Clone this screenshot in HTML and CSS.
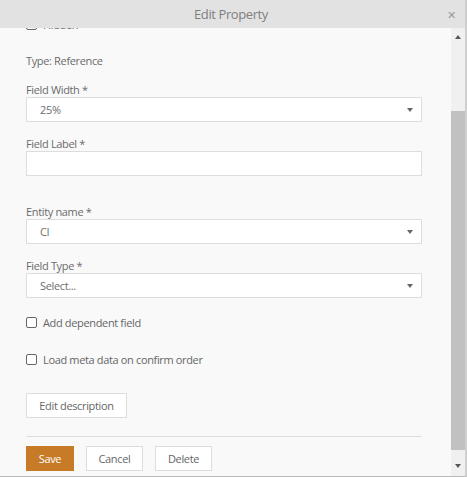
FILE: index.html
```html
<!DOCTYPE html>
<html lang="en">
<head>
    <meta charset="UTF-8">
    <meta name="viewport" content="width=device-width, initial-scale=1.0">
    <title>Edit Property</title>
    <link rel="stylesheet" href="styles.css">
</head>
<body>
    <div class="modal">
        <div class="modal-header">
            <span class="modal-title">Edit Property</span>
            <span class="modal-close">&#x2715;</span>
        </div>

        <div class="modal-body">
            <div class="modal-content">
                <label class="check-row check-hidden">
                    <span class="check-box"></span>
                    <span>Hidden</span>
                </label>

                <div class="type-line">Type: Reference</div>

                <div class="form-group">
                    <div class="field-label">Field Width *</div>
                    <div class="select-box">25%<span class="caret"></span></div>
                </div>

                <div class="form-group">
                    <div class="field-label">Field Label *</div>
                    <div class="text-box"></div>
                </div>

                <div class="form-group spaced">
                    <div class="field-label">Entity name *</div>
                    <div class="select-box">CI<span class="caret"></span></div>
                </div>

                <div class="form-group">
                    <div class="field-label">Field Type *</div>
                    <div class="select-box">Select...<span class="caret"></span></div>
                </div>

                <label class="check-row check-dependent">
                    <span class="check-box"></span>
                    <span>Add dependent field</span>
                </label>

                <label class="check-row check-meta">
                    <span class="check-box"></span>
                    <span>Load meta data on confirm order</span>
                </label>

                <button class="btn btn-desc">Edit description</button>

                <div class="divider"></div>

                <div class="button-group">
                    <button class="btn btn-save">Save</button>
                    <button class="btn btn-cancel">Cancel</button>
                    <button class="btn btn-delete">Delete</button>
                </div>
            </div>

            <div class="scrollbar">
                <span class="arrow arrow-up"></span>
                <div class="track">
                    <div class="thumb"></div>
                </div>
                <span class="arrow arrow-down"></span>
            </div>
        </div>
    </div>
</body>
</html>
```

FILE: styles.css
```css
html, body {
    margin: 0;
    padding: 0;
}
body {
    font-family: "Open Sans", "Noto Sans", sans-serif;
    font-size: 11px;
    letter-spacing: -0.35px;
    color: #666;
    background: #f9f9f9;
}
.modal {
    width: 465px;
    height: 476px;
    display: flex;
    flex-direction: column;
    border-right: 2px solid #cfcfcf;
    border-bottom: 1px solid #b9b9b9;
    background: #f9f9f9;
}
.modal-header {
    height: 28px;
    flex: none;
    background: #e2e2e2;
    position: relative;
    z-index: 2;
    display: flex;
    align-items: center;
    justify-content: center;
}
.modal-title {
    font-size: 13px;
    letter-spacing: -0.4px;
    color: #808080;
    margin-right: 3px;
}
.modal-close {
    position: absolute;
    right: 9px;
    top: 7px;
    font-size: 11px;
    color: #999;
}
.modal-body {
    flex: 1;
    display: flex;
    overflow: hidden;
}
.modal-content {
    flex: 1;
    padding: 0 29px 0 26px;
}

/* checkboxes */
.check-row {
    display: flex;
    align-items: center;
    height: 16px;
    line-height: 16px;
    color: #666;
}
.check-box {
    width: 9px;
    height: 9px;
    border: 1px solid #666;
    border-radius: 2px;
    background: #fff;
    margin-right: 6px;
    margin-bottom: 1px;
}
.check-hidden {
    margin-top: -11px;
}
.check-dependent {
    margin-top: 17px;
}
.check-meta {
    margin-top: 21px;
}

.type-line {
    margin-top: 21px;
    line-height: 14px;
    color: #6b6b6b;
}

/* fields */
.form-group {
    margin-top: 15px;
}
.form-group:first-of-type {
    margin-top: 16px;
}
.form-group.spaced {
    margin-top: 29px;
}
.field-label {
    line-height: 14px;
    color: #6b6b6b;
}
.select-box, .text-box {
    box-sizing: border-box;
    height: 25px;
    background: #fff;
    border: 1px solid #ddd;
    line-height: 23px;
    padding-left: 13px;
    color: #6e6e6e;
    position: relative;
}
.caret {
    position: absolute;
    right: 8px;
    top: 10px;
    width: 0;
    height: 0;
    border-left: 3.5px solid transparent;
    border-right: 3.5px solid transparent;
    border-top: 4px solid #666;
}

/* buttons */
.btn {
    box-sizing: border-box;
    height: 25px;
    font-family: inherit;
    font-size: 11px;
    letter-spacing: -0.35px;
    color: #666;
    background: #fff;
    border: 1px solid #ddd;
    padding: 0;
    cursor: pointer;
}
.btn-desc {
    display: block;
    margin-top: 25px;
    width: 101px;
}
.divider {
    height: 1px;
    background: #ddd;
    margin-top: 18px;
}
.button-group {
    display: flex;
    gap: 12px;
    margin-top: 9px;
}
.btn-save {
    width: 48px;
    background: #c77b27;
    border-color: #c77b27;
    color: #fff;
}
.btn-cancel {
    width: 57px;
}
.btn-delete {
    width: 57px;
}

/* scrollbar */
.scrollbar {
    width: 14px;
    flex: none;
    background: #f0f0f0;
    display: flex;
    flex-direction: column;
    align-items: center;
}
.arrow {
    width: 0;
    height: 0;
    border-left: 3.5px solid transparent;
    border-right: 3.5px solid transparent;
}
.arrow-up {
    border-bottom: 4px solid #555;
    margin-top: 7px;
}
.arrow-down {
    border-top: 4px solid #555;
    margin-bottom: 8px;
}
.track {
    flex: 1;
    width: 14px;
    display: flex;
    flex-direction: column;
    padding-top: 72px;
    padding-bottom: 14px;
    box-sizing: border-box;
}
.thumb {
    flex: 1;
    background: #c1c1c1;
}
```
